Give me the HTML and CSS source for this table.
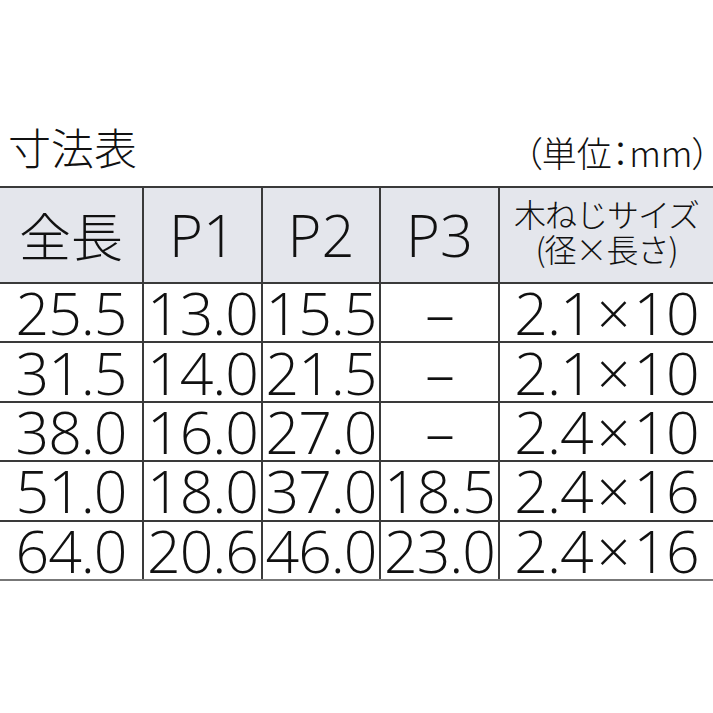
FILE: index.html
```html
<!DOCTYPE html>
<html lang="ja">
<head>
<meta charset="utf-8">
<link rel="stylesheet" href="styles.css">
</head>
<body>
<div class="page">
  <div class="caption">
    <span class="title">寸法表</span>
    <span class="unit">（単位：mm）</span>
  </div>
  <table class="dims">
    <colgroup>
      <col class="c0"><col class="c1"><col class="c2"><col class="c3"><col class="c4">
    </colgroup>
    <thead>
      <tr>
        <th class="big">全長</th>
        <th>P1</th>
        <th>P2</th>
        <th>P3</th>
        <th class="small">木ねじサイズ<br>(径×長さ)</th>
      </tr>
    </thead>
    <tbody>
      <tr><td>25.5</td><td>13.0</td><td>15.5</td><td>–</td><td>2.1<span class="x">×</span>10</td></tr>
      <tr><td>31.5</td><td>14.0</td><td>21.5</td><td>–</td><td>2.1<span class="x">×</span>10</td></tr>
      <tr><td>38.0</td><td>16.0</td><td>27.0</td><td>–</td><td>2.4<span class="x">×</span>10</td></tr>
      <tr><td>51.0</td><td>18.0</td><td>37.0</td><td>18.5</td><td>2.4<span class="x">×</span>16</td></tr>
      <tr><td>64.0</td><td>20.6</td><td>46.0</td><td>23.0</td><td>2.4<span class="x">×</span>16</td></tr>
    </tbody>
  </table>
</div>
</body>
</html>
```
FILE: styles.css
```css
html, body {
  margin: 0;
  padding: 0;
  background: #ffffff;
}
body {
  font-family: "Noto Sans CJK JP", "Noto Sans", sans-serif;
  color: #111111;
}
.page {
  padding-top: 116px;
}
.caption {
  display: flex;
  justify-content: space-between;
  align-items: flex-end;
  padding: 0 3px 0 8px;
  height: 70px;
}
.title {
  font-size: 43px;
  line-height: 62px;
  font-weight: 300;
  margin-bottom: 9px;
}
.unit {
  font-size: 35px;
  line-height: 52px;
  font-weight: 300;
  font-feature-settings: "palt" 1;
  margin-bottom: 8px;
}
.dims {
  border-collapse: collapse;
  width: 713px;
  table-layout: fixed;
}
.c0 { width: 143px; }
.c1 { width: 119px; }
.c2 { width: 118px; }
.c3 { width: 119px; }
.c4 { width: 214px; }
.dims th, .dims td {
  border: 2px solid #3a3a3a;
  padding: 0;
  text-align: center;
  font-weight: 300;
  white-space: nowrap;
}
.dims tr > :first-child { border-left: none; }
.dims tr > :last-child { border-right: none; }
.dims thead tr { border-top: 2px solid #444; }
.dims th {
  background: #e4e6ec;
  height: 94px;
  font-family: "Open Sans", "Noto Sans CJK JP", sans-serif;
  font-size: 58px;
  line-height: 60px;
}
.dims th.big {
  font-family: "Noto Sans CJK JP", sans-serif;
  font-size: 52px;
}
.dims th.small {
  font-family: "Noto Sans CJK JP", sans-serif;
  font-size: 32px;
  line-height: 35px;
  letter-spacing: -1px;
  height: 86px;
  padding-bottom: 8px;
}
.dims td {
  height: 57.4px;
  font-family: "Open Sans", "Noto Sans CJK JP", sans-serif;
  font-size: 59px;
  line-height: 57px;
  letter-spacing: -1px;
}
.dims td .x {
  margin: 0 4px;
}
.dims tbody tr:last-child td { border-bottom-color: #777; }
```
